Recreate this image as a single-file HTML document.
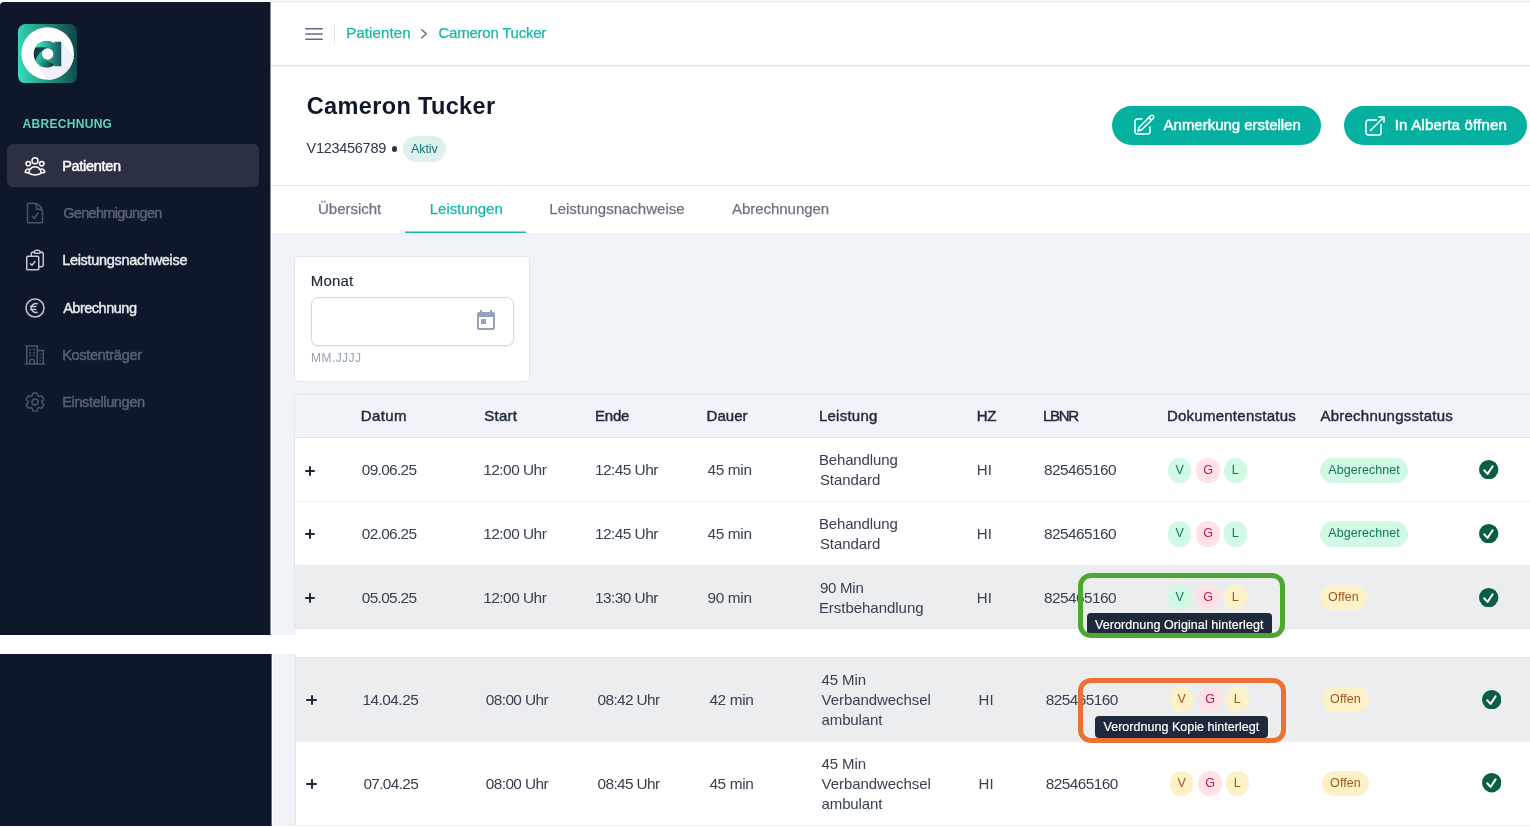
<!DOCTYPE html>
<html lang="de"><head><meta charset="utf-8"><title>Cameron Tucker</title><style>
*{box-sizing:border-box;margin:0;padding:0}
html,body{width:1530px;height:828px;background:#fff;overflow:hidden;font-family:"Liberation Sans",sans-serif}
.t{position:absolute;white-space:nowrap}
.a{position:absolute}
#top{position:absolute;left:0;top:0;width:1530px;height:635px;overflow:hidden;background:#fff}
.gl{position:absolute;left:0;top:0;width:1530px;height:828px;will-change:transform}
#bot{position:absolute;left:0;top:654px;width:1530px;height:172px;overflow:hidden;background:#fff}
#bot .sh{position:absolute;left:0;top:-654px;width:1530px;height:828px}
.pill{position:absolute;border-radius:13px;font-size:12.5px;line-height:25.4px;height:25.2px;text-align:center;white-space:nowrap}
.g{background:#d1fae5;color:#14755a}
.r{background:#ffe1e6;color:#b5204c}
.y{background:#fdf1c7;color:#a4551c}
.chk{position:absolute;width:19.4px;height:19.4px}
</style></head><body>
<div id="top">
 <!-- top hairline -->
 <div class="a" style="left:0;top:0;width:1530px;height:1px;background:#f6f6f6"></div>
 <div class="a" style="left:271px;top:1px;width:1259px;height:1px;background:#ededed"></div>
 <div class="a" style="left:271px;top:2px;width:1259px;height:1px;background:#fafafa"></div>
 <!-- page grey bg -->
 <div class="a" style="left:272px;top:233px;width:1258px;height:402px;background:#f0f4f8"></div>
 <!-- sidebar -->
 <div class="a" style="left:0;top:2px;width:270px;height:633px;background:#0f172a;border-top-left-radius:4px"></div>
 <div class="a" style="left:270px;top:2px;width:1px;height:633px;background:#878b94"></div>
 <div class="a" style="left:7px;top:144px;width:252px;height:43px;background:#2b3142;border-radius:6px"></div>
 <!-- topbar line -->
 <div class="a" style="left:271px;top:65px;width:1259px;height:1px;background:#e3e4e7"></div>
 <div class="a" style="left:271px;top:66px;width:1259px;height:1px;background:#f4f4f5"></div>
 <div class="a" style="left:333.5px;top:23.5px;width:1px;height:20px;background:#dfe4ec"></div>
 <!-- header separator -->
 <div class="a" style="left:271px;top:185px;width:1259px;height:1px;background:#e7e9ee"></div>
 <!-- active tab underline -->
 <div class="a" style="left:405px;top:231px;width:121px;height:1px;background:#8ad9cf"></div><div class="a" style="left:405px;top:232px;width:121px;height:1px;background:#14b8a6"></div>
 <!-- Aktiv badge -->
 <div class="a" style="left:403px;top:136px;width:43.3px;height:25.5px;border-radius:13px;background:#dff1ee"></div>
 <div class="a" style="left:392.2px;top:146.4px;width:5.2px;height:5.2px;border-radius:50%;background:#2d3748"></div>
 <!-- buttons -->
 <div class="a" style="left:1112px;top:105.5px;width:208.5px;height:39.5px;border-radius:20px;background:#06b0a0"></div>
 <div class="a" style="left:1344px;top:105.5px;width:183px;height:39.5px;border-radius:20px;background:#06b0a0"></div>
 <!-- Monat card -->
 <div class="a" style="left:294px;top:256px;width:236px;height:125.5px;background:#fff;border:1px solid #e4e6ea;border-radius:4px"></div>
 <div class="a" style="left:310.8px;top:296.8px;width:203.2px;height:49px;background:#fff;border:1px solid #d1d8e3;border-radius:7px;box-shadow:0 1px 2px rgba(15,23,42,.06)"></div>
 <!-- table card -->
 <div class="a" style="left:294px;top:394px;width:1260px;height:300px;background:#fff;border:1px solid #e4e6ea;border-radius:4px;overflow:hidden">
   <div class="a" style="left:0;top:0;width:1260px;height:43px;background:#f0f4f8;border-bottom:1px solid #e2e6ec"></div>
   <div class="a" style="left:0;top:106px;width:1260px;height:1px;background:#eef0f5"></div>
   <div class="a" style="left:0;top:170px;width:1260px;height:64px;background:#ecedef;border-bottom:1px solid #e6e8f0"></div>
 </div>
 <!-- tooltip 1 -->
 <div class="a" style="left:1087px;top:612.8px;width:185.2px;height:22.4px;background:#1e293b;border-radius:4px"></div>
 <div class="gl">
 <div class="pill g" style="left:1167.9px;top:457.6px;width:23.4px">V</div>
<div class="pill r" style="left:1195.7px;top:457.6px;width:24.7px">G</div>
<div class="pill g" style="left:1223.8px;top:457.6px;width:23.1px">L</div>
<div class="pill g" style="left:1320.3px;top:457.6px;width:87.5px;letter-spacing:0.05px">Abgerechnet</div>
<svg class="chk" style="left:1479.3px;top:459.9px" viewBox="0 0 20 20"><circle cx="10" cy="10" r="10" fill="#0b5e45"/><path d="M5.4 10.6L8.8 14.4L14 6.6" fill="none" stroke="#fff" stroke-width="2.05" stroke-linecap="round" stroke-linejoin="round"/></svg>
<div class="a" style="left:305.0px;top:469.6px;width:10.4px;height:2px;border-radius:1px;background:#1e293b"></div><div class="a" style="left:309.2px;top:465.6px;width:2px;height:10px;border-radius:1px;background:#1e293b"></div>
 <div class="pill g" style="left:1167.9px;top:521.4px;width:23.4px">V</div>
<div class="pill r" style="left:1195.7px;top:521.4px;width:24.7px">G</div>
<div class="pill g" style="left:1223.8px;top:521.4px;width:23.1px">L</div>
<div class="pill g" style="left:1320.3px;top:521.4px;width:87.5px;letter-spacing:0.05px">Abgerechnet</div>
<svg class="chk" style="left:1479.3px;top:523.7px" viewBox="0 0 20 20"><circle cx="10" cy="10" r="10" fill="#0b5e45"/><path d="M5.4 10.6L8.8 14.4L14 6.6" fill="none" stroke="#fff" stroke-width="2.05" stroke-linecap="round" stroke-linejoin="round"/></svg>
<div class="a" style="left:305.0px;top:533.4px;width:10.4px;height:2px;border-radius:1px;background:#1e293b"></div><div class="a" style="left:309.2px;top:529.4px;width:2px;height:10px;border-radius:1px;background:#1e293b"></div>
 <div class="pill g" style="left:1167.9px;top:584.8px;width:23.4px">V</div>
<div class="pill r" style="left:1195.7px;top:584.8px;width:24.7px">G</div>
<div class="pill y" style="left:1223.8px;top:584.8px;width:23.1px">L</div>
<div class="pill y" style="left:1320.0px;top:584.8px;width:47px;letter-spacing:0.1px">Offen</div>
<svg class="chk" style="left:1479.3px;top:587.5px" viewBox="0 0 20 20"><circle cx="10" cy="10" r="10" fill="#0b5e45"/><path d="M5.4 10.6L8.8 14.4L14 6.6" fill="none" stroke="#fff" stroke-width="2.05" stroke-linecap="round" stroke-linejoin="round"/></svg>
<div class="a" style="left:305.0px;top:597.2px;width:10.4px;height:2px;border-radius:1px;background:#1e293b"></div><div class="a" style="left:309.2px;top:593.2px;width:2px;height:10px;border-radius:1px;background:#1e293b"></div>
 <svg class="a" style="left:22.5px;top:153.5px" width="24" height="24" viewBox="0 0 24 24" fill="none" stroke="#ffffff" stroke-width="1.5" stroke-linecap="round" stroke-linejoin="round"><path d="M18 18.72a9.094 9.094 0 0 0 3.741-.479 3 3 0 0 0-4.682-2.72m.94 3.198.001.031c0 .225-.012.447-.037.666A11.944 11.944 0 0 1 12 21c-2.17 0-4.207-.576-5.963-1.584A6.062 6.062 0 0 1 6 18.719m12 0a5.971 5.971 0 0 0-.941-3.197m0 0A5.995 5.995 0 0 0 12 12.75a5.995 5.995 0 0 0-5.058 2.772m0 0a3 3 0 0 0-4.681 2.72 8.986 8.986 0 0 0 3.74.477m.94-3.197a5.971 5.971 0 0 0-.94 3.197M15 6.75a3 3 0 1 1-6 0 3 3 0 0 1 6 0Zm6 3a2.25 2.25 0 1 1-4.5 0 2.25 2.25 0 0 1 4.5 0Zm-13.5 0a2.25 2.25 0 1 1-4.5 0 2.25 2.25 0 0 1 4.5 0Z"/></svg>
<svg class="a" style="left:22.6px;top:201.1px" width="24" height="24" viewBox="0 0 24 24" fill="none" stroke="#4b5568" stroke-width="1.5" stroke-linecap="round" stroke-linejoin="round"><path d="M10.125 2.25h-4.5c-.621 0-1.125.504-1.125 1.125v17.25c0 .621.504 1.125 1.125 1.125h12.75c.621 0 1.125-.504 1.125-1.125v-9M10.125 2.25h.375a9 9 0 0 1 9 9v.375M10.125 2.25A3.375 3.375 0 0 1 13.5 5.625v1.5c0 .621.504 1.125 1.125 1.125h1.5a3.375 3.375 0 0 1 3.375 3.375M9 15l2.25 2.25L15 12"/></svg>
<svg class="a" style="left:22.5px;top:248.2px" width="24" height="24" viewBox="0 0 24 24" fill="none" stroke="#c3c7cf" stroke-width="1.5" stroke-linecap="round" stroke-linejoin="round"><path d="M11.35 3.836c-.065.21-.1.433-.1.664 0 .414.336.75.75.75h4.5a.75.75 0 0 0 .75-.75 2.25 2.25 0 0 0-.1-.664m-5.8 0A2.251 2.251 0 0 1 13.5 2.25H15c1.012 0 1.867.668 2.15 1.586m-5.8 0c-.376.023-.75.05-1.124.08C9.095 4.01 8.25 4.973 8.25 6.108V8.25m8.9-4.414c.376.023.75.05 1.124.08 1.131.094 1.976 1.057 1.976 2.192V16.5A2.25 2.25 0 0 1 18 18.75h-2.25m-7.5-10.5H4.875c-.621 0-1.125.504-1.125 1.125v11.25c0 .621.504 1.125 1.125 1.125h9.75c.621 0 1.125-.504 1.125-1.125V18.75m-7.5-10.5h6.375c.621 0 1.125.504 1.125 1.125v9.375m-8.25-3 1.5 1.5 3-3.75"/></svg>
<svg class="a" style="left:22.5px;top:295.5px" width="24" height="24" viewBox="0 0 24 24" fill="none" stroke="#c3c7cf" stroke-width="1.5" stroke-linecap="round" stroke-linejoin="round"><path d="M14.25 7.756a4.5 4.5 0 1 0 0 8.488M7.5 10.5h5.25m-5.25 3h5.25M21 12a9 9 0 1 1-18 0 9 9 0 0 1 18 0Z"/></svg>
<svg class="a" style="left:22.7px;top:342.5px" width="24" height="24" viewBox="0 0 24 24" fill="none" stroke="#4b5568" stroke-width="1.5" stroke-linecap="round" stroke-linejoin="round"><path d="M2.25 21h19.5m-18-18v18m10.5-18v18m6-13.5V21M6.75 6.75h.75m-.75 3h.75m-.75 3h.75m3-6h.75m-.75 3h.75m-.75 3h.75M6.75 21v-3.375c0-.621.504-1.125 1.125-1.125h2.25c.621 0 1.125.504 1.125 1.125V21M3 3h12m-.75 4.5H21m-3.75 3.75h.008v.008h-.008v-.008Zm0 3h.008v.008h-.008v-.008Zm0 3h.008v.008h-.008v-.008Z"/></svg>
<svg class="a" style="left:22.5px;top:389.7px" width="24" height="24" viewBox="0 0 24 24" fill="none" stroke="#4b5568" stroke-width="1.5" stroke-linecap="round" stroke-linejoin="round"><path d="M9.594 3.94c.09-.542.56-.94 1.11-.94h2.593c.55 0 1.02.398 1.11.94l.213 1.281c.063.374.313.686.645.87.074.04.147.083.22.127.325.196.72.257 1.075.124l1.217-.456a1.125 1.125 0 0 1 1.37.49l1.296 2.247a1.125 1.125 0 0 1-.26 1.431l-1.003.827c-.293.241-.438.613-.43.992a7.723 7.723 0 0 1 0 .255c-.008.378.137.75.43.991l1.004.827c.424.35.534.955.26 1.43l-1.298 2.247a1.125 1.125 0 0 1-1.369.491l-1.217-.456c-.355-.133-.75-.072-1.076.124a6.47 6.47 0 0 1-.22.128c-.331.183-.581.495-.644.869l-.213 1.281c-.09.543-.56.94-1.11.94h-2.594c-.55 0-1.019-.398-1.11-.94l-.213-1.281c-.062-.374-.312-.686-.644-.87a6.52 6.52 0 0 1-.22-.127c-.325-.196-.72-.257-1.076-.124l-1.217.456a1.125 1.125 0 0 1-1.369-.49l-1.297-2.247a1.125 1.125 0 0 1 .26-1.431l1.004-.827c.292-.24.437-.613.43-.991a6.932 6.932 0 0 1 0-.255c.007-.38-.138-.751-.43-.992l-1.004-.827a1.125 1.125 0 0 1-.26-1.43l1.297-2.247a1.125 1.125 0 0 1 1.37-.491l1.216.456c.356.133.751.072 1.076-.124.072-.044.146-.086.22-.128.332-.183.582-.495.644-.869l.214-1.28ZM15 12a3 3 0 1 1-6 0 3 3 0 0 1 6 0Z"/></svg>
<svg class="a" style="left:301.6px;top:21.6px" width="24" height="24" viewBox="0 0 24 24" fill="none" stroke="#5f6b86" stroke-width="1.4" stroke-linecap="round" stroke-linejoin="round"><path d="M3.75 6.75h16.5M3.75 12h16.5m-16.5 5.25h16.5"/></svg>
<svg class="a" style="left:1131.5px;top:113.4px" width="24" height="24" viewBox="0 0 24 24" fill="none" stroke="#ffffff" stroke-width="1.5" stroke-linecap="round" stroke-linejoin="round"><path d="m16.862 4.487 1.687-1.688a1.875 1.875 0 1 1 2.652 2.652L10.582 16.07a4.5 4.5 0 0 1-1.897 1.13L6 18l.8-2.685a4.5 4.5 0 0 1 1.13-1.897l8.932-8.931Zm0 0L19.5 7.125M18 14v4.75A2.25 2.25 0 0 1 15.75 21H5.25A2.25 2.25 0 0 1 3 18.75V8.25A2.25 2.25 0 0 1 5.25 6H10"/></svg>
<svg class="a" style="left:1363.2px;top:113.6px" width="24" height="24" viewBox="0 0 24 24" fill="none" stroke="#ffffff" stroke-width="1.5" stroke-linecap="round" stroke-linejoin="round"><path d="M13.5 6H5.25A2.25 2.25 0 0 0 3 8.25v10.5A2.25 2.25 0 0 0 5.25 21h10.5A2.25 2.25 0 0 0 18 18.75V10.5m-10.5 6L21 3m0 0h-5.25M21 3v5.25"/></svg>
<svg class="a" style="left:418px;top:26px" width="12" height="16" viewBox="0 0 12 16" fill="none" stroke="#5f6b86" stroke-width="1.4" stroke-linecap="round" stroke-linejoin="round"><path d="M3.7 3.7 8.3 7.8 3.7 11.9"/></svg>
<svg class="a" style="left:474px;top:308.9px" width="24" height="24" viewBox="0 0 24 24" fill="#94a3b8"><path d="M19 3h-1V1h-2v2H8V1H6v2H5c-1.11 0-1.99.9-1.99 2L3 19c0 1.1.89 2 2 2h14c1.1 0 2-.9 2-2V5c0-1.1-.9-2-2-2zm0 16H5V8h14v11zM7 10h5v5H7z"/></svg>
<svg class="a" style="left:18.4px;top:23.8px" width="59" height="59.4" viewBox="0 0 59 59.4">
<defs>
<linearGradient id="lg1" x1="0" y1="0.55" x2="1" y2="0.45"><stop offset="0" stop-color="#36d9ba"/><stop offset="0.45" stop-color="#23987f"/><stop offset="1" stop-color="#12474a"/></linearGradient>
<linearGradient id="gA" gradientUnits="userSpaceOnUse" x1="230" y1="0" x2="720" y2="0"><stop offset="0" stop-color="#33dcbb"/><stop offset="0.55" stop-color="#22917f"/><stop offset="1" stop-color="#18555a"/></linearGradient>
<linearGradient id="gC" gradientUnits="userSpaceOnUse" x1="130" y1="470" x2="520" y2="700"><stop offset="0" stop-color="#2fd8b7"/><stop offset="0.5" stop-color="#1f8f80"/><stop offset="1" stop-color="#0d3540"/></linearGradient>
<linearGradient id="gB" gradientUnits="userSpaceOnUse" x1="100" y1="0" x2="420" y2="0"><stop offset="0" stop-color="#0e3642"/><stop offset="1" stop-color="#1b5a5d"/></linearGradient>
<clipPath id="cc"><circle cx="29.65" cy="29.45" r="26.3"/></clipPath>
</defs>
<rect width="59" height="59.4" rx="7.6" fill="url(#lg1)"/>
<circle cx="29.65" cy="29.45" r="26.3" fill="#fff"/>
<g clip-path="url(#cc)">
<path d="M42.9 17.6 L67.7 48.8 L43 75 L20.5 41.8 Z" fill="#f1effb"/>
<path d="M42.9 17.6 L67.7 48.8" stroke="#cfe6e2" stroke-width="0.4"/><path d="M20.5 41.8 L43 75" stroke="#bfe3dc" stroke-width="0.4"/>
</g>
<g transform="translate(11.95 12.2) scale(0.0434783)">
<circle cx="385" cy="410" r="299" fill="url(#gB)"/>
<path fill="url(#gC)" d="M420 262 C300 285 190 400 128 566 A300 300 0 0 0 560 668 L560 640 Q420 600 300 490 A132 132 0 0 1 407 278 Z"/>
<path fill="url(#gA)" d="M120 268 A300 300 0 0 1 560 166 L560 125 L720 125 L720 690 L560 690 L560 640 Q420 600 300 490 A132 132 0 1 0 407 278 L420 262 Q270 235 120 268 Z"/>
<circle cx="407" cy="410" r="132" fill="#fff"/>
</g>
</svg>
 <div class="t" style="left:346.20px;top:22.00px;font-size:15px;line-height:21px;font-weight:400;color:#14b8a6;letter-spacing:0.120px;-webkit-text-stroke:0.25px #14b8a6">Patienten</div>
<div class="t" style="left:438.50px;top:22.00px;font-size:15px;line-height:21px;font-weight:400;color:#14b8a6;letter-spacing:-0.235px;-webkit-text-stroke:0.25px #14b8a6">Cameron Tucker</div>
<div class="t" style="left:306.70px;top:89.50px;font-size:23.5px;line-height:33px;font-weight:700;color:#0f172a;letter-spacing:0.364px">Cameron Tucker</div>
<div class="t" style="left:306.50px;top:138.00px;font-size:14.5px;line-height:20px;font-weight:400;color:#2d3748;letter-spacing:-0.276px">V123456789</div>
<div class="t" style="left:411.00px;top:140.00px;font-size:12.5px;line-height:18px;font-weight:400;color:#0f766e;letter-spacing:-0.084px">Aktiv</div>
<div class="t" style="left:318.00px;top:198.00px;font-size:15px;line-height:21px;font-weight:400;color:#6b7280;letter-spacing:-0.023px;-webkit-text-stroke:0.25px #6b7280">Übersicht</div>
<div class="t" style="left:429.80px;top:198.00px;font-size:15px;line-height:21px;font-weight:400;color:#14b8a6;letter-spacing:-0.050px;-webkit-text-stroke:0.25px #14b8a6">Leistungen</div>
<div class="t" style="left:549.30px;top:198.00px;font-size:15px;line-height:21px;font-weight:400;color:#6b7280;letter-spacing:0.015px;-webkit-text-stroke:0.25px #6b7280">Leistungsnachweise</div>
<div class="t" style="left:732.00px;top:198.00px;font-size:15px;line-height:21px;font-weight:400;color:#6b7280;letter-spacing:-0.040px;-webkit-text-stroke:0.25px #6b7280">Abrechnungen</div>
<div class="t" style="left:310.80px;top:270.00px;font-size:15px;line-height:21px;font-weight:400;color:#1e293b;letter-spacing:0.145px;-webkit-text-stroke:0.2px #1e293b">Monat</div>
<div class="t" style="left:311.00px;top:349.50px;font-size:12px;line-height:17px;font-weight:400;color:#94a3b8;letter-spacing:0.446px">MM.JJJJ</div>
<div class="t" style="left:360.80px;top:405.00px;font-size:15px;line-height:21px;font-weight:400;color:#1e293b;letter-spacing:0.379px;-webkit-text-stroke:0.45px #1e293b">Datum</div>
<div class="t" style="left:484.20px;top:405.00px;font-size:15px;line-height:21px;font-weight:400;color:#1e293b;letter-spacing:0.273px;-webkit-text-stroke:0.45px #1e293b">Start</div>
<div class="t" style="left:595.00px;top:405.00px;font-size:15px;line-height:21px;font-weight:400;color:#1e293b;letter-spacing:-0.230px;-webkit-text-stroke:0.45px #1e293b">Ende</div>
<div class="t" style="left:706.50px;top:405.00px;font-size:15px;line-height:21px;font-weight:400;color:#1e293b;letter-spacing:0.060px;-webkit-text-stroke:0.45px #1e293b">Dauer</div>
<div class="t" style="left:818.90px;top:405.00px;font-size:15px;line-height:21px;font-weight:400;color:#1e293b;letter-spacing:0.247px;-webkit-text-stroke:0.45px #1e293b">Leistung</div>
<div class="t" style="left:976.80px;top:405.00px;font-size:15px;line-height:21px;font-weight:400;color:#1e293b;letter-spacing:-0.433px;-webkit-text-stroke:0.45px #1e293b">HZ</div>
<div class="t" style="left:1042.90px;top:405.00px;font-size:15px;line-height:21px;font-weight:400;color:#1e293b;letter-spacing:-1.293px;-webkit-text-stroke:0.45px #1e293b">LBNR</div>
<div class="t" style="left:1166.90px;top:405.00px;font-size:15px;line-height:21px;font-weight:400;color:#1e293b;letter-spacing:0.255px;-webkit-text-stroke:0.45px #1e293b">Dokumentenstatus</div>
<div class="t" style="left:1320.40px;top:405.00px;font-size:15px;line-height:21px;font-weight:400;color:#1e293b;letter-spacing:0.249px;-webkit-text-stroke:0.45px #1e293b">Abrechnungsstatus</div>
<div class="t" style="left:361.80px;top:458.50px;font-size:15.4px;line-height:22px;font-weight:400;color:#374151;letter-spacing:-0.664px">09.06.25</div>
<div class="t" style="left:483.20px;top:458.50px;font-size:15.4px;line-height:22px;font-weight:400;color:#374151;letter-spacing:-0.496px">12:00 Uhr</div>
<div class="t" style="left:595.00px;top:458.50px;font-size:15.4px;line-height:22px;font-weight:400;color:#374151;letter-spacing:-0.533px">12:45 Uhr</div>
<div class="t" style="left:707.50px;top:458.50px;font-size:15.4px;line-height:22px;font-weight:400;color:#374151;letter-spacing:-0.347px">45 min</div>
<div class="t" style="left:976.80px;top:459.00px;font-size:15px;line-height:21px;font-weight:400;color:#374151;letter-spacing:0.167px">HI</div>
<div class="t" style="left:1043.90px;top:458.50px;font-size:15.4px;line-height:22px;font-weight:400;color:#374151;letter-spacing:-0.547px">825465160</div>
<div class="t" style="left:818.90px;top:449.00px;font-size:15px;line-height:21px;font-weight:400;color:#374151;letter-spacing:-0.137px">Behandlung</div>
<div class="t" style="left:819.90px;top:469.00px;font-size:15px;line-height:21px;font-weight:400;color:#374151;letter-spacing:-0.062px">Standard</div>
<div class="t" style="left:361.80px;top:522.50px;font-size:15.4px;line-height:22px;font-weight:400;color:#374151;letter-spacing:-0.664px">02.06.25</div>
<div class="t" style="left:483.20px;top:522.50px;font-size:15.4px;line-height:22px;font-weight:400;color:#374151;letter-spacing:-0.496px">12:00 Uhr</div>
<div class="t" style="left:595.00px;top:522.50px;font-size:15.4px;line-height:22px;font-weight:400;color:#374151;letter-spacing:-0.533px">12:45 Uhr</div>
<div class="t" style="left:707.50px;top:522.50px;font-size:15.4px;line-height:22px;font-weight:400;color:#374151;letter-spacing:-0.347px">45 min</div>
<div class="t" style="left:976.80px;top:523.00px;font-size:15px;line-height:21px;font-weight:400;color:#374151;letter-spacing:0.167px">HI</div>
<div class="t" style="left:1043.90px;top:522.50px;font-size:15.4px;line-height:22px;font-weight:400;color:#374151;letter-spacing:-0.547px">825465160</div>
<div class="t" style="left:818.90px;top:513.00px;font-size:15px;line-height:21px;font-weight:400;color:#374151;letter-spacing:-0.137px">Behandlung</div>
<div class="t" style="left:819.90px;top:533.00px;font-size:15px;line-height:21px;font-weight:400;color:#374151;letter-spacing:-0.062px">Standard</div>
<div class="t" style="left:361.80px;top:586.50px;font-size:15.4px;line-height:22px;font-weight:400;color:#374151;letter-spacing:-0.664px">05.05.25</div>
<div class="t" style="left:483.20px;top:586.50px;font-size:15.4px;line-height:22px;font-weight:400;color:#374151;letter-spacing:-0.496px">12:00 Uhr</div>
<div class="t" style="left:595.00px;top:586.50px;font-size:15.4px;line-height:22px;font-weight:400;color:#374151;letter-spacing:-0.533px">13:30 Uhr</div>
<div class="t" style="left:707.50px;top:586.50px;font-size:15.4px;line-height:22px;font-weight:400;color:#374151;letter-spacing:-0.347px">90 min</div>
<div class="t" style="left:976.80px;top:587.00px;font-size:15px;line-height:21px;font-weight:400;color:#374151;letter-spacing:0.167px">HI</div>
<div class="t" style="left:1043.90px;top:586.50px;font-size:15.4px;line-height:22px;font-weight:400;color:#374151;letter-spacing:-0.547px">825465160</div>
<div class="t" style="left:819.90px;top:577.00px;font-size:15px;line-height:21px;font-weight:400;color:#374151;letter-spacing:-0.216px">90 Min</div>
<div class="t" style="left:818.90px;top:597.00px;font-size:15px;line-height:21px;font-weight:400;color:#374151;letter-spacing:-0.034px">Erstbehandlung</div>
<div class="t" style="left:22.60px;top:115.50px;font-size:12px;line-height:17px;font-weight:700;color:#5fd4bd;letter-spacing:0.296px">ABRECHNUNG</div>
<div class="t" style="left:62.20px;top:156.00px;font-size:14.5px;line-height:20px;font-weight:400;color:#ffffff;letter-spacing:-0.313px;-webkit-text-stroke:0.45px #ffffff">Patienten</div>
<div class="t" style="left:63.20px;top:203.00px;font-size:14.5px;line-height:20px;font-weight:400;color:#596275;letter-spacing:-0.671px;-webkit-text-stroke:0.45px #596275">Genehmigungen</div>
<div class="t" style="left:62.20px;top:250.00px;font-size:14.5px;line-height:20px;font-weight:400;color:#e8eaee;letter-spacing:-0.313px;-webkit-text-stroke:0.45px #e8eaee">Leistungsnachweise</div>
<div class="t" style="left:63.20px;top:298.00px;font-size:14.5px;line-height:20px;font-weight:400;color:#e8eaee;letter-spacing:-0.493px;-webkit-text-stroke:0.45px #e8eaee">Abrechnung</div>
<div class="t" style="left:62.20px;top:345.00px;font-size:14.5px;line-height:20px;font-weight:400;color:#596275;letter-spacing:-0.290px;-webkit-text-stroke:0.45px #596275">Kostenträger</div>
<div class="t" style="left:62.20px;top:392.00px;font-size:14.5px;line-height:20px;font-weight:400;color:#596275;letter-spacing:-0.350px;-webkit-text-stroke:0.45px #596275">Einstellungen</div>
<div class="t" style="left:1163.60px;top:114.00px;font-size:15px;line-height:21px;font-weight:400;color:#ffffff;letter-spacing:-0.024px;-webkit-text-stroke:0.45px #ffffff">Anmerkung erstellen</div>
<div class="t" style="left:1394.70px;top:114.00px;font-size:15px;line-height:21px;font-weight:400;color:#ffffff;letter-spacing:0.202px;-webkit-text-stroke:0.45px #ffffff">In Alberta öffnen</div>
<div class="t" style="left:1095.00px;top:616.00px;font-size:12.5px;line-height:18px;font-weight:400;color:#ffffff;letter-spacing:0.083px;-webkit-text-stroke:0.2px #ffffff">Verordnung Original hinterlegt</div>
 </div>
</div>

<div id="bot"><div class="sh">
 <div class="a" style="left:0;top:654px;width:271px;height:172px;background:#0f172a"></div>
 <div class="a" style="left:271px;top:654px;width:1px;height:172px;background:#6b7080"></div>
 <div class="a" style="left:273px;top:654px;width:22px;height:172px;background:#f0f4f8"></div>
 <div class="a" style="left:295px;top:654px;width:1px;height:172px;background:#e4e6ea"></div>
 <!-- row 4 hovered -->
 <div class="a" style="left:296px;top:654px;width:1240px;height:3px;background:#fff"></div>
 <div class="a" style="left:296px;top:657px;width:1240px;height:84.6px;background:#ecedef;border-top:1px solid #e6e8f0"></div>
 <div class="a" style="left:296px;top:825px;width:1240px;height:1px;background:#eef0f5"></div>
 <!-- tooltip 2 -->
 <div class="a" style="left:1095.3px;top:715.5px;width:172.3px;height:22.2px;background:#1e293b;border-radius:4px"></div>
 <div class="gl">
 <div class="pill y" style="left:1169.9px;top:686.9px;width:23.4px">V</div>
<div class="pill r" style="left:1197.7px;top:686.9px;width:24.7px">G</div>
<div class="pill y" style="left:1225.8px;top:686.9px;width:23.1px">L</div>
<div class="pill y" style="left:1322.0px;top:686.9px;width:47px;letter-spacing:0.1px">Offen</div>
<svg class="chk" style="left:1481.5px;top:689.7px" viewBox="0 0 20 20"><circle cx="10" cy="10" r="10" fill="#0b5e45"/><path d="M5.4 10.6L8.8 14.4L14 6.6" fill="none" stroke="#fff" stroke-width="2.05" stroke-linecap="round" stroke-linejoin="round"/></svg>
<div class="a" style="left:306.4px;top:699.2px;width:10.4px;height:2px;border-radius:1px;background:#1e293b"></div><div class="a" style="left:310.6px;top:695.2px;width:2px;height:10px;border-radius:1px;background:#1e293b"></div>
 <div class="pill y" style="left:1169.9px;top:770.7px;width:23.4px">V</div>
<div class="pill r" style="left:1197.7px;top:770.7px;width:24.7px">G</div>
<div class="pill y" style="left:1225.8px;top:770.7px;width:23.1px">L</div>
<div class="pill y" style="left:1322.0px;top:770.7px;width:47px;letter-spacing:0.1px">Offen</div>
<svg class="chk" style="left:1481.5px;top:773.3px" viewBox="0 0 20 20"><circle cx="10" cy="10" r="10" fill="#0b5e45"/><path d="M5.4 10.6L8.8 14.4L14 6.6" fill="none" stroke="#fff" stroke-width="2.05" stroke-linecap="round" stroke-linejoin="round"/></svg>
<div class="a" style="left:306.4px;top:783.0px;width:10.4px;height:2px;border-radius:1px;background:#1e293b"></div><div class="a" style="left:310.6px;top:779.0px;width:2px;height:10px;border-radius:1px;background:#1e293b"></div>
 
 <div class="t" style="left:362.40px;top:688.50px;font-size:15.4px;line-height:22px;font-weight:400;color:#374151;letter-spacing:-0.507px">14.04.25</div>
<div class="t" style="left:485.80px;top:688.50px;font-size:15.4px;line-height:22px;font-weight:400;color:#374151;letter-spacing:-0.596px">08:00 Uhr</div>
<div class="t" style="left:597.60px;top:688.50px;font-size:15.4px;line-height:22px;font-weight:400;color:#374151;letter-spacing:-0.633px">08:42 Uhr</div>
<div class="t" style="left:709.40px;top:688.50px;font-size:15.4px;line-height:22px;font-weight:400;color:#374151;letter-spacing:-0.367px">42 min</div>
<div class="t" style="left:978.50px;top:689.00px;font-size:15px;line-height:21px;font-weight:400;color:#374151;letter-spacing:0.167px">HI</div>
<div class="t" style="left:1045.70px;top:688.50px;font-size:15.4px;line-height:22px;font-weight:400;color:#374151;letter-spacing:-0.547px">825465160</div>
<div class="t" style="left:821.60px;top:669.00px;font-size:15px;line-height:21px;font-weight:400;color:#374151;letter-spacing:-0.116px">45 Min</div>
<div class="t" style="left:821.60px;top:689.00px;font-size:15px;line-height:21px;font-weight:400;color:#374151;letter-spacing:-0.065px">Verbandwechsel</div>
<div class="t" style="left:821.60px;top:709.00px;font-size:15px;line-height:21px;font-weight:400;color:#374151;letter-spacing:-0.134px">ambulant</div>
<div class="t" style="left:363.40px;top:772.50px;font-size:15.4px;line-height:22px;font-weight:400;color:#374151;letter-spacing:-0.650px">07.04.25</div>
<div class="t" style="left:485.80px;top:772.50px;font-size:15.4px;line-height:22px;font-weight:400;color:#374151;letter-spacing:-0.596px">08:00 Uhr</div>
<div class="t" style="left:597.60px;top:772.50px;font-size:15.4px;line-height:22px;font-weight:400;color:#374151;letter-spacing:-0.633px">08:45 Uhr</div>
<div class="t" style="left:709.40px;top:772.50px;font-size:15.4px;line-height:22px;font-weight:400;color:#374151;letter-spacing:-0.367px">45 min</div>
<div class="t" style="left:978.50px;top:773.00px;font-size:15px;line-height:21px;font-weight:400;color:#374151;letter-spacing:0.167px">HI</div>
<div class="t" style="left:1045.70px;top:772.50px;font-size:15.4px;line-height:22px;font-weight:400;color:#374151;letter-spacing:-0.547px">825465160</div>
<div class="t" style="left:821.60px;top:753.00px;font-size:15px;line-height:21px;font-weight:400;color:#374151;letter-spacing:-0.116px">45 Min</div>
<div class="t" style="left:821.60px;top:773.00px;font-size:15px;line-height:21px;font-weight:400;color:#374151;letter-spacing:-0.065px">Verbandwechsel</div>
<div class="t" style="left:821.60px;top:793.00px;font-size:15px;line-height:21px;font-weight:400;color:#374151;letter-spacing:-0.134px">ambulant</div>
<div class="t" style="left:1103.50px;top:718.00px;font-size:12.5px;line-height:18px;font-weight:400;color:#ffffff;letter-spacing:0.031px;-webkit-text-stroke:0.2px #ffffff">Verordnung Kopie hinterlegt</div>
 </div>
</div></div>

<div class="a" style="left:1078px;top:573px;width:207px;height:64.8px;border:5.2px solid #4ea72e;border-radius:13px"></div>
<div class="a" style="left:1078px;top:678.2px;width:208px;height:64.4px;border:5.2px solid #e97132;border-radius:13px"></div>
</body></html>
